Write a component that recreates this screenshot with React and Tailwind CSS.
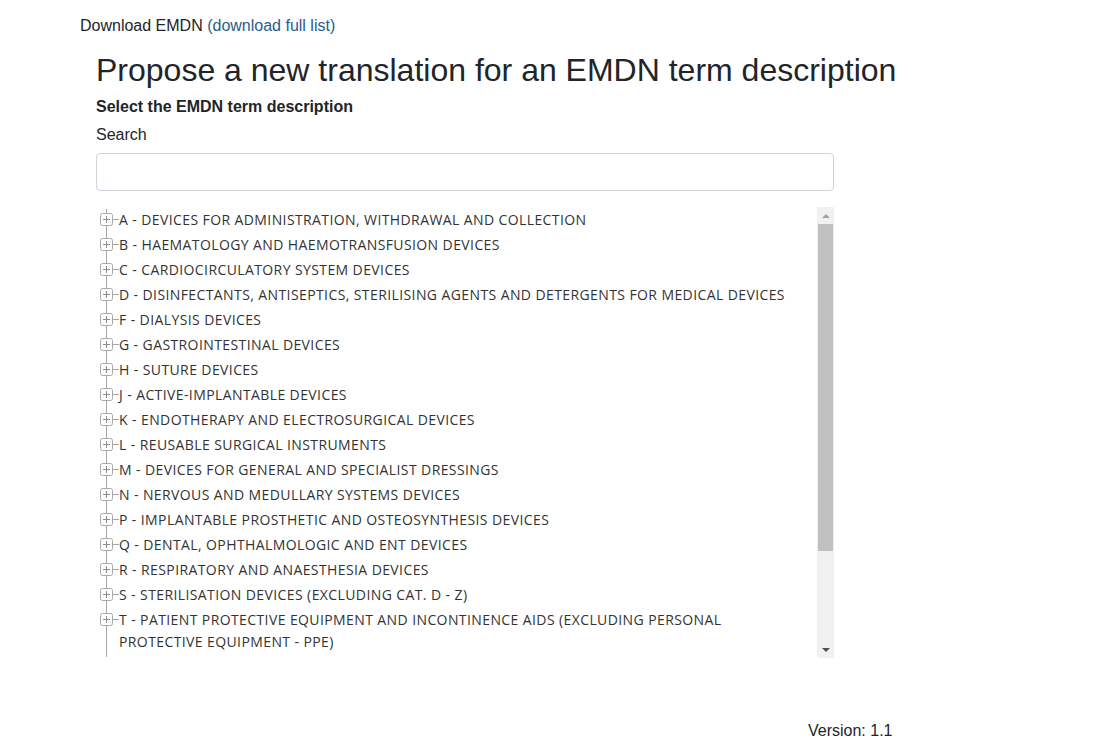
import React from 'react';

const terms = [
  'A - DEVICES FOR ADMINISTRATION, WITHDRAWAL AND COLLECTION',
  'B - HAEMATOLOGY AND HAEMOTRANSFUSION DEVICES',
  'C - CARDIOCIRCULATORY SYSTEM DEVICES',
  'D - DISINFECTANTS, ANTISEPTICS, STERILISING AGENTS AND DETERGENTS FOR MEDICAL DEVICES',
  'F - DIALYSIS DEVICES',
  'G - GASTROINTESTINAL DEVICES',
  'H - SUTURE DEVICES',
  'J - ACTIVE-IMPLANTABLE DEVICES',
  'K - ENDOTHERAPY AND ELECTROSURGICAL DEVICES',
  'L - REUSABLE SURGICAL INSTRUMENTS',
  'M - DEVICES FOR GENERAL AND SPECIALIST DRESSINGS',
  'N - NERVOUS AND MEDULLARY SYSTEMS DEVICES',
  'P - IMPLANTABLE PROSTHETIC AND OSTEOSYNTHESIS DEVICES',
  'Q - DENTAL, OPHTHALMOLOGIC AND ENT DEVICES',
  'R - RESPIRATORY AND ANAESTHESIA DEVICES',
  'S - STERILISATION DEVICES (EXCLUDING CAT. D - Z)',
];

const PlusBox = () => (
  <svg width="13" height="13" viewBox="0 0 13 13" className="shrink-0 bg-white">
    <rect x="0.5" y="0.5" width="12" height="12" rx="2" fill="#fff" stroke="#a8a8a8" />
    <path d="M3 6.5h7M6.5 3v7" stroke="#8c8c8c" strokeWidth="1" />
  </svg>
);

const TreeRow = ({ children }) => (
  <div className="flex items-start">
    <div className="flex items-center h-[25px] shrink-0">
      <PlusBox />
      <div className="w-[6px] h-px bg-[#a8a8a8]" />
    </div>
    <div className="leading-[22px] pt-[1.5px] pb-[1.5px]">{children}</div>
  </div>
);

const App = () => {
  return (
    <div className="w-[1112px] h-[748px] bg-white text-[#212529] font-['Liberation_Sans',Arial,sans-serif] relative">
      <div className="pl-[80px] pt-[16px] text-[16px] leading-[20px]">
        Download EMDN <span className="text-[#295c8c]">(download full list)</span>
      </div>

      <div className="pl-[96px] w-[834px]">
        <h1 className="text-[32px] leading-[40px] mt-[14px] font-normal whitespace-nowrap">
          Propose a new translation for an EMDN term description
        </h1>
        <div className="text-[16px] font-bold leading-[20px] mt-[7px]">Select the EMDN term description</div>
        <div className="text-[16px] leading-[20px] mt-[8px]">Search</div>
        <div className="mt-[8px] h-[38px] border border-[#ced4da] rounded-[4px]" />

        <div className="mt-[16px] h-[451px] flex">
          <div className="flex-1 overflow-hidden pl-[4px] relative font-['Open_Sans',sans-serif] text-[14px] text-[#333] tracking-[0.4px]">
            <div className="absolute left-[10px] top-[2px] h-[448px] w-px bg-[#a8a8a8]" />
            <div className="relative">
              {terms.map((t) => (
                <TreeRow key={t}>{t}</TreeRow>
              ))}
              <TreeRow>
                T - PATIENT PROTECTIVE EQUIPMENT AND INCONTINENCE AIDS (EXCLUDING PERSONAL
                <br />
                PROTECTIVE EQUIPMENT - PPE)
              </TreeRow>
            </div>
          </div>
          <div className="w-[17px] bg-[#f1f1f1] flex flex-col items-center">
            <div className="h-[17px] flex items-center justify-center">
              <div className="w-0 h-0 border-l-[4px] border-r-[4px] border-b-[4px] border-l-transparent border-r-transparent border-b-[#a3a3a3]" />
            </div>
            <div className="w-[15px] h-[327px] bg-[#c1c1c1]" />
            <div className="flex-1" />
            <div className="h-[17px] flex items-center justify-center">
              <div className="w-0 h-0 border-l-[4px] border-r-[4px] border-t-[4px] border-l-transparent border-r-transparent border-t-[#505050]" />
            </div>
          </div>
        </div>
      </div>

      <div className="absolute left-[808px] top-[721px] text-[16px] leading-[20px]">Version: 1.1</div>
    </div>
  );
};

export default App;
